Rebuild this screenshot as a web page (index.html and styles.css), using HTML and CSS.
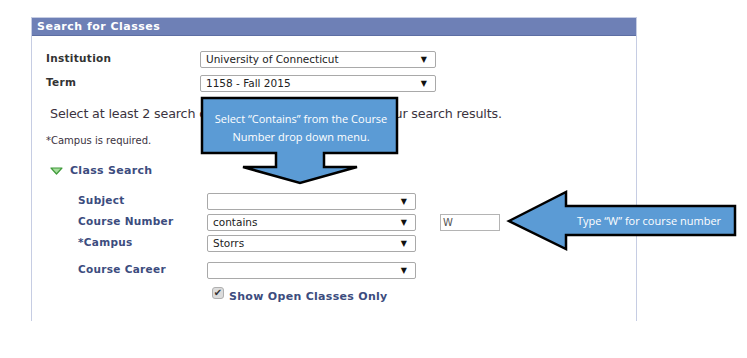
FILE: index.html
```html
<!DOCTYPE html>
<html lang="en">
<head>
  <meta charset="UTF-8" />
  <title>Search for Classes</title>
  <link rel="stylesheet" href="styles.css">
</head>
<body>

  <div class="page">
    <div class="panel">
      <div class="panel-head">Search for Classes</div>

      <div class="top-fields">
        <div class="label dark">Institution</div>
        <div class="select">University of Connecticut<span class="caret">▼</span></div>
        <div class="label dark">Term</div>
        <div class="select">1158 - Fall 2015<span class="caret">▼</span></div>
      </div>

      <p class="intro">Select at least 2 search criteria. Click Search to view your search results.</p>
      <p class="note">*Campus is required.</p>

      <div class="section-title">
        <svg class="tri" width="13" height="8" viewBox="0 0 13 8">
          <polygon points="1,1 12,1 6.5,7" />
        </svg>
        Class Search
      </div>

      <div class="criteria">
        <div class="label">Subject</div>
        <div class="select"><span class="caret">▼</span></div>
        <div></div>

        <div class="label">Course Number</div>
        <div class="select">contains<span class="caret">▼</span></div>
        <div class="text-box">W</div>

        <div class="label">*Campus</div>
        <div class="select">Storrs<span class="caret">▼</span></div>
        <div></div>

        <div class="label career">Course Career</div>
        <div class="select career">&nbsp;<span class="caret">▼</span></div>
        <div></div>
      </div>

      <div class="open-only">
        <span class="check">✔</span>
        <span class="open-text">Show Open Classes Only</span>
      </div>
    </div>

    <!-- instructional callouts laid over the screen capture -->
    <svg class="callouts" width="747" height="358" viewBox="0 0 747 358">
      <polygon class="callout" points="202,98 397,98 397,153 324,153 324,167 357,167 300,183 243,167 276,167 276,153 202,153" />
      <polygon class="callout" points="509,221 566,192 566,206 735,206 735,235 566,235 566,249" />
      <text x="301" y="123">Select “Contains” from the Course</text>
      <text x="301" y="141">Number drop down menu.</text>
      <text x="649" y="225">Type “W” for course number</text>
    </svg>
  </div>

</body>
</html>
```

FILE: styles.css
```css
* {
  margin: 0;
  padding: 0;
  box-sizing: border-box;
}

body {
  background: #ffffff;
  font-family: 'DejaVu Sans', Verdana, sans-serif;
  color: #333333;
}

.page {
  position: relative;
  width: 747px;
  height: 358px;
  padding: 17px 0 0 31px;
}

.panel {
  width: 606px;
  height: 304px;
  border: 1px solid #c6cde3;
  border-bottom: none;
}

.panel-head {
  height: 18px;
  background: #6e80b6;
  border-bottom: 1px solid #5d6ea3;
  color: #ffffff;
  font-weight: bold;
  font-size: 11px;
  line-height: 17px;
  padding-left: 5px;
  letter-spacing: 0.5px;
}

.label {
  font-size: 10.5px;
  font-weight: bold;
  color: #3c4c7e;
  letter-spacing: 0.3px;
  line-height: 15px;
}

.label.dark {
  color: #333333;
}

.select {
  position: relative;
  height: 17px;
  border: 1px solid #a9a9a9;
  border-radius: 2px;
  background: #ffffff;
  font-size: 10.5px;
  line-height: 15px;
  padding-left: 5px;
  color: #222222;
}

.caret {
  position: absolute;
  right: 8px;
  top: 0;
  font-size: 8px;
  color: #111111;
}

.top-fields {
  display: grid;
  grid-template-columns: 154px 236px;
  grid-template-rows: 17px 17px;
  row-gap: 7px;
  padding: 15px 0 0 14px;
  align-items: start;
}

.intro {
  font-size: 12.7px;
  letter-spacing: -0.15px;
  padding: 14px 0 0 18px;
  color: #3b3340;
}

.note {
  font-size: 10px;
  padding: 14px 0 0 14px;
  color: #3b3340;
}

.section-title {
  display: flex;
  align-items: center;
  gap: 7px;
  padding: 18px 0 0 18px;
  font-size: 11px;
  font-weight: bold;
  color: #3c4c7e;
  letter-spacing: 0.3px;
}

.tri polygon {
  fill: #a6dd9c;
  stroke: #3f9a3a;
  stroke-width: 1.2;
  stroke-linejoin: round;
}

.criteria {
  display: grid;
  grid-template-columns: 129px 209px 84px;
  grid-template-rows: 17px 17px 17px 17px;
  row-gap: 4px;
  padding: 16px 0 0 46px;
  align-items: start;
}

.criteria .label.career,
.criteria .select.career {
  margin-top: 6px;
}

.criteria .text-box {
  justify-self: end;
  width: 60px;
  height: 17px;
  border: 1px solid #b4b4b4;
  font-size: 10px;
  line-height: 15px;
  padding-left: 2px;
  color: #555555;
}

.open-only {
  display: flex;
  align-items: flex-start;
  gap: 5px;
  padding: 14px 0 0 180px;
  font-size: 11px;
  font-weight: bold;
  color: #3c4c7e;
  letter-spacing: 0.3px;
}

.open-text {
  padding-top: 3px;
}

.check {
  width: 12px;
  height: 12px;
  border: 1px solid #b0b0b0;
  border-radius: 3px;
  background: #dcdcdc;
  font-size: 10px;
  line-height: 10px;
  text-align: center;
  color: #333333;
}

.callouts {
  position: absolute;
  left: 0;
  top: 0;
}

.callout {
  fill: #5b9bd5;
  stroke: #000000;
  stroke-width: 2.5;
  stroke-linejoin: miter;
}

.callouts text {
  font-family: 'Open Sans', sans-serif;
  font-size: 11px;
  fill: #ffffff;
  text-anchor: middle;
}
```
